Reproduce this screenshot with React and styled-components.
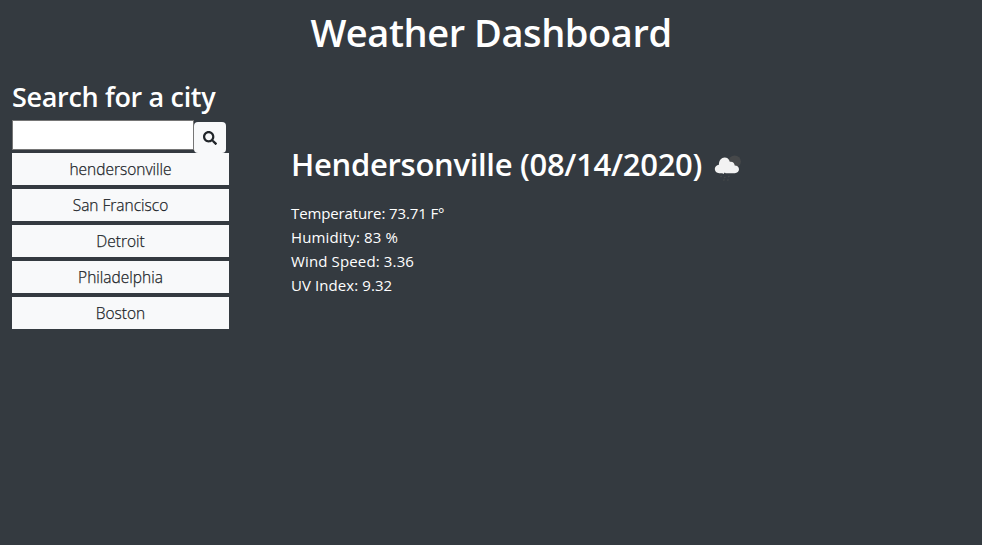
import React from "react";
import styled, { createGlobalStyle } from "styled-components";

const GlobalStyle = createGlobalStyle`
  *, *::before, *::after { box-sizing: border-box; }
  html, body { margin: 0; background: #343a40; }
  body {
    color: #fff;
    font-family: "Segoe UI", "Open Sans", "Noto Sans", sans-serif;
    font-size: 16px;
    line-height: 24px;
    overflow: hidden;
  }
`;

const Page = styled.div`
  min-height: 545px;
  background: #343a40;
`;

const Title = styled.h1`
  margin: 0;
  padding-top: 8px;
  text-align: center;
  font-size: 38px;
  font-weight: 600;
  line-height: 48px;
  letter-spacing: -0.44px;
`;

const Columns = styled.div`
  display: flex;
  align-items: flex-start;
  padding: 24px 12px 0;
`;

const Sidebar = styled.aside`
  width: 217px;
  flex: none;
`;

const SearchHeading = styled.h3`
  margin: 0 0 6px;
  font-size: 27px;
  font-weight: 600;
  line-height: 34px;
  white-space: nowrap;
  letter-spacing: -0.33px;
`;

const SearchRow = styled.form`
  display: flex;
  align-items: flex-start;
  height: 33px;
`;

const SearchInput = styled.input`
  width: 182px;
  height: 30px;
  margin: 0;
  border: 1px solid #767676;
  border-radius: 0;
  background: #fff;
  outline: none;
`;

const SearchButton = styled.button`
  display: flex;
  align-items: center;
  justify-content: center;
  width: 32px;
  height: 31px;
  margin-top: 2px;
  padding: 0;
  border: 0;
  border-radius: 4px;
  background: #f8f9fa;
  color: #212529;
`;

const CityList = styled.div`
  display: flex;
  flex-direction: column;
  gap: 4px;
`;

const CityButton = styled.button`
  height: 32px;
  padding: 0;
  border: 0;
  background: #f8f9fa;
  color: #212529;
  font: 300 15.5px/32px "Segoe UI", "Open Sans", "Noto Sans", sans-serif;
  text-align: center;
  -webkit-text-stroke: 0.25px #212529;
`;

const Weather = styled.main`
  margin: 66px 0 0 62px;
`;

const CityRow = styled.div`
  display: flex;
  align-items: center;
  height: 36px;
`;

const CityName = styled.h2`
  margin: 0;
  font-size: 31px;
  font-weight: 600;
  line-height: 36px;
  white-space: nowrap;
  letter-spacing: -0.3px;
`;

const WeatherIcon = styled.svg`
  margin: 1px 0 0 9px;
  flex: none;
`;

const Stats = styled.div`
  margin-top: 19px;
`;

const Stat = styled.div`
  height: 24px;
  font-size: 15px;
  line-height: 24px;
  white-space: nowrap;
  letter-spacing: ${(p) => p.$track}px;
`;

const cities = ["hendersonville", "San Francisco", "Detroit", "Philadelphia", "Boston"];

const stats = [
  { text: "Temperature: 73.71 F°", track: -0.12 },
  { text: "Humidity: 83 %", track: 0.15 },
  { text: "Wind Speed: 3.36", track: 0.14 },
  { text: "UV Index: 9.32", track: 0.08 },
];

const SearchIcon = () => (
  <svg width="14" height="14" viewBox="0 0 512 512" fill="currentColor" aria-hidden="true">
    <path d="M505 442.7L405.3 343c-4.5-4.5-10.6-7-17-7H372c27.6-35.3 44-79.7 44-128C416 93.1 322.9 0 208 0S0 93.1 0 208s93.1 208 208 208c48.3 0 92.7-16.4 128-44v16.3c0 6.4 2.5 12.5 7 17l99.7 99.7c9.4 9.4 24.6 9.4 33.9 0l28.3-28.3c9.4-9.4 9.4-24.6.1-34zM208 336c-70.7 0-128-57.2-128-128 0-70.7 57.2-128 128-128 70.7 0 128 57.2 128 128 0 70.7-57.2 128-128 128z" />
  </svg>
);

const RainIcon = () => (
  <WeatherIcon width="32" height="32" viewBox="0 0 32 32" aria-hidden="true">
    <circle cx="23.7" cy="12.6" r="6.2" fill="#46484a" />
    <path fill="#f2f2f2" d="M8.2 24.2c-2.6 0-4.4-1.800-4.400-4.100 0-2.300 1.700-4 4.100-4.300C7.900 11.600 10.400 8.600 13.600 8.600c2.600 0 4.500 1.500 5.200 4.200 2.700-.6 4.700 1.200 4.900 3.700 2.500 0 4.300 1.600 4.300 3.800 0 2.300-1.700 3.900-4.200 3.900h-9.200l-.8-.7-1.400 1.400-1-.7z" />
    <g stroke="#4a4c4e" strokeWidth="1.200" strokeLinecap="round">
      <path d="M10.200 27.200l-.3.500M14 28.200l-.3.500M18 27.200l-.3.500M13 30.800l-.2.300M17 30.800l-.2.300" />
    </g>
  </WeatherIcon>
);

export default function App() {
  return (
    <Page>
      <GlobalStyle />
      <Title>Weather Dashboard</Title>
      <Columns>
        <Sidebar>
          <SearchHeading>Search for a city</SearchHeading>
          <SearchRow onSubmit={(e) => e.preventDefault()}>
            <SearchInput type="text" aria-label="City" />
            <SearchButton type="submit" aria-label="Search">
              <SearchIcon />
            </SearchButton>
          </SearchRow>
          <CityList>
            {cities.map((city) => (
              <CityButton key={city}>{city}</CityButton>
            ))}
          </CityList>
        </Sidebar>
        <Weather>
          <CityRow>
            <CityName>Hendersonville (08/14/2020)</CityName>
            <RainIcon />
          </CityRow>
          <Stats>
            {stats.map((s) => (
              <Stat key={s.text} $track={s.track}>{s.text}</Stat>
            ))}
          </Stats>
        </Weather>
      </Columns>
    </Page>
  );
}
